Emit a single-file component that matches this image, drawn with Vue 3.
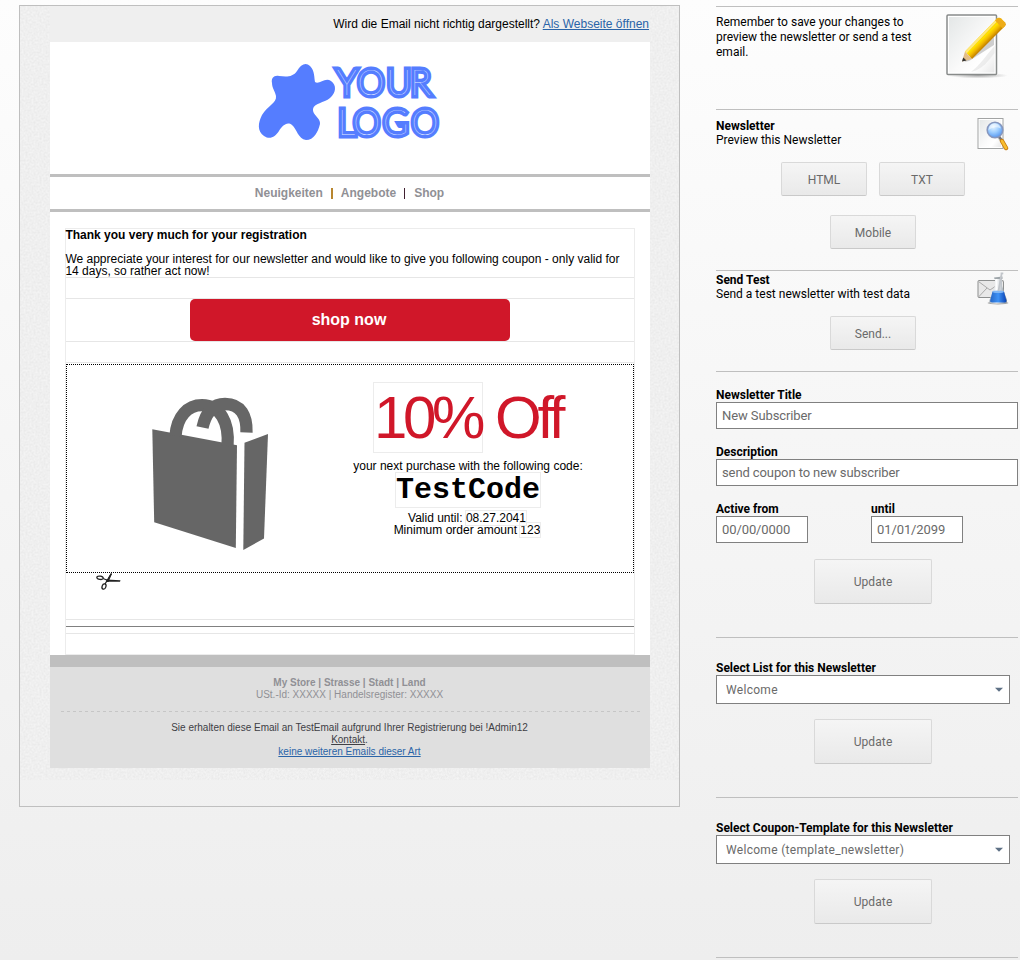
<script setup>
const selects = [
  { label: 'Select List for this Newsletter', value: 'Welcome' },
  { label: 'Select Coupon-Template for this Newsletter', value: 'Welcome (template_newsletter)' },
]
</script>

<template>
  <div class="page">
    <main class="panel">
      <svg class="grain" width="659" height="774" aria-hidden="true">
        <filter id="grain" x="0" y="0" width="100%" height="100%" color-interpolation-filters="sRGB">
          <feTurbulence type="fractalNoise" baseFrequency="0.5" numOctaves="2" seed="4" stitchTiles="stitch" />
          <feColorMatrix type="matrix" values="0.07 0 0 0 0.902  0.07 0 0 0 0.902  0.07 0 0 0 0.902  0 0 0 0 1" />
        </filter>
        <rect width="659" height="774" filter="url(#grain)" />
      </svg>
      <div class="email">
        <div class="webview">Wird die Email nicht richtig dargestellt? <a class="blue">Als Webseite öffnen</a></div>
        <div class="brand">
          <svg width="190" height="90" viewBox="255 58 190 90">
            <path fill="#557dff" d="M272 83C271 78 274 75 279 76C287 77 293 77 297 71C301 64 306 62 310 66C315 71 314 78 315 82C319 85 325 77 331 81C337 85 336 93 330 98C324 103 314 103 313 109C312 115 321 118 320 124C318 132 314 140 306 140C298 139 297 129 292 125C287 121 282 126 279 131C275 137 270 140 264 136C257 131 258 123 262 115C267 106 277 103 276 96C275 91 272 88 272 83Z" />
            <g class="logo">
              <text transform="translate(337 94.500) scale(.95 1)" x="0 21.500 52 77.500">YOUR</text>
              <text transform="translate(337 135) scale(.95 1)" x="1 17.200 48.500 78.500">LOGO</text>
            </g>
          </svg>
        </div>
        <nav class="nav"><a>Neuigkeiten</a><i class="sep amber"></i><a>Angebote</a><i class="sep dark"></i><a>Shop</a></nav>
        <div class="content">
          <div class="frame">
            <div class="intro">
              <b>Thank you very much for your registration</b>
              <p>We appreciate your interest for our newsletter and would like to give you following coupon - only valid for<br>14 days, so rather act now!</p>
            </div>
            <div class="cta"><a class="shop">shop now</a></div>
            <div class="spacer"></div>
            <div class="coupon">
              <svg class="bag" width="120" height="156" viewBox="0 0 120 156">
                <g fill="#666">
                  <path d="M1.300 33.300L86 49.300L84.800 152L3.200 126.300Z" />
                  <path d="M93.500 46.800L117 38L113 142.500L92.300 154Z" />
                </g>
                <g fill="none" stroke="#666" stroke-width="12.300">
                  <path d="M24.500 40C26 20 37 9.200 51 9.200C69 9.200 78.500 26 76.500 50" />
                  <path d="M51.500 31.500C55 16 62 8 74 8C90 8 96 20 95.500 36.500" />
                </g>
              </svg>
              <div class="offer">
                <div class="percent"><span class="boxed">10%</span> Off</div>
                <div class="next">your next purchase with the following code:</div>
                <div class="code"><span class="boxed">TestCode</span></div>
                <div class="terms">Valid until: <span class="boxed">08.27.2041</span></div>
                <div class="terms">Minimum order amount <span class="boxed">123</span></div>
              </div>
            </div>
            <div class="cut">
              <svg width="26" height="18" viewBox="0 0 26 18">
                <g fill="none" stroke="#222" stroke-width="1.300">
                  <ellipse cx="4" cy="4.800" rx="3.200" ry="1.600" transform="rotate(8 4 4.800)" />
                  <ellipse cx="8" cy="13.500" rx="1.900" ry="2.700" transform="rotate(20 8 13.500)" />
                  <path d="M7 5.500L12 7.500M9 11L15.500 .5" />
                </g>
                <path fill="#222" d="M10 6.500L24.500 7.300L24 8.800L11 8.800Z" />
                <path fill="#222" d="M10 9L14.500 .5L16 .8L12.500 9Z" />
              </svg>
            </div>
            <div class="rule"></div>
          </div>
        </div>
        <footer class="footer">
          <div class="imprint"><b>My Store | Strasse | Stadt | Land</b><br>USt.-Id: XXXXX | Handelsregister: XXXXX</div>
          <svg class="dashes" width="580" height="1"><path d="M1 .5H580" stroke="#c6c6c6" stroke-dasharray="3 3" /></svg>
          <div class="legal">Sie erhalten diese Email an TestEmail aufgrund Ihrer Registrierung bei !Admin12<br><u>Kontakt</u>.<br><a class="blue">keine weiteren Emails dieser Art</a></div>
        </footer>
      </div>
    </main>

    <aside class="side">
      <section class="s-note">
        <p>Remember to save your changes to<br>preview the newsletter or send a test<br>email.</p>
        <svg class="icon-note" width="64" height="68" viewBox="0 0 64 68">
          <defs>
            <linearGradient id="sheet" x1="0" y1="0" x2="1" y2="1"><stop offset="0" stop-color="#e4e7e7" /><stop offset=".55" stop-color="#fafafa" /><stop offset=".75" stop-color="#fff" /><stop offset="1" stop-color="#e8e8e8" /></linearGradient>
            <linearGradient id="pencil" gradientUnits="userSpaceOnUse" x1="35" y1="22" x2="42.500" y2="29.500"><stop offset="0" stop-color="#f5c400" /><stop offset=".4" stop-color="#ffe000" /><stop offset=".7" stop-color="#f2b900" /><stop offset="1" stop-color="#c98700" /></linearGradient>
            <radialGradient id="ground"><stop offset="0" stop-color="#888" stop-opacity=".7" /><stop offset="1" stop-color="#888" stop-opacity="0" /></radialGradient>
          </defs>
          <ellipse cx="33" cy="62.500" rx="30" ry="3" fill="url(#ground)" />
          <rect x="2" y="2" width="49.500" height="59.500" rx="1" fill="#fff" stroke="#888b8a" stroke-width="1.500" />
          <rect x="4" y="4" width="45.500" height="55.500" fill="url(#sheet)" />
          <path d="M26 59C34 53 40 44 49.500 33V40C43 48 38 56 26 59Z" fill="#ddd" opacity=".5" />
          <path d="M19 49L49 24V32L24 48Z" fill="#777" opacity=".35" />
          <path d="M20 38.500L52 5.500Q54 4 56 5.500L60 9.500Q61.500 11.500 60 13L27 46Z" fill="url(#pencil)" />
          <path d="M20 38.500L52 5.500L53.500 7L21.500 40.500Z" fill="#ffe97a" />
          <path d="M50 7.500L52 5.500Q54 4 56 5.500L60 9.500Q61.500 11.500 60 13L57.500 15.500Z" fill="#eeac18" />
          <path d="M20 38.500L27 46L17 48.500Z" fill="#e3bd87" />
          <path d="M18.200 44.500L21.500 47.400L17 48.500Z" fill="#333" />
        </svg>
      </section>

      <section class="s-preview">
        <div class="row">
          <p><b>Newsletter</b><br>Preview this Newsletter</p>
          <svg class="icon-s" width="32" height="34" viewBox="0 0 32 34">
            <defs>
              <radialGradient id="lens" cx=".4" cy=".3" r=".8"><stop offset="0" stop-color="#e5f4ff" /><stop offset=".45" stop-color="#9ccdff" /><stop offset="1" stop-color="#4388ec" /></radialGradient>
            </defs>
            <rect x="1" y="1.500" width="25" height="30" fill="#fff" stroke="#a2a4a4" />
            <rect x="2.500" y="3" width="21.500" height="27" fill="url(#sheet)" />
            <path d="M21 19L24 23L29.500 31" stroke="#777" stroke-width="3" opacity=".4" fill="none" />
            <path d="M21.500 19L25 23.500" stroke="#777" stroke-width="2.500" />
            <path d="M25 24L29 31" stroke="#c77b10" stroke-width="4.400" stroke-linecap="round" />
            <path d="M25 24L29 31" stroke="#f8bd2f" stroke-width="2.600" stroke-linecap="round" />
            <circle cx="18" cy="13" r="7.800" fill="url(#lens)" stroke="#8797bd" stroke-width="1.600" />
            <path d="M11.500 13Q17 8.500 24 11.500C22.500 5 12.500 4 11.500 13Z" fill="#fff" opacity=".5" />
          </svg>
        </div>
        <div class="buttons"><button class="btn">HTML</button><button class="btn">TXT</button></div>
        <div class="buttons"><button class="btn">Mobile</button></div>
      </section>

      <section class="s-test">
        <div class="row">
          <p><b>Send Test</b><br>Send a test newsletter with test data</p>
          <svg class="icon-s" width="32" height="34" viewBox="0 0 32 34">
            <defs>
              <linearGradient id="liquid"><stop offset="0" stop-color="#2566c6" /><stop offset=".5" stop-color="#3e92f5" /><stop offset="1" stop-color="#0a43b5" /></linearGradient>
              <linearGradient id="glass"><stop offset="0" stop-color="#a9b4bd" /><stop offset=".4" stop-color="#fff" /><stop offset="1" stop-color="#7d8b98" /></linearGradient>
            </defs>
            <rect x="1" y="9.500" width="25.500" height="17" rx="1" fill="#e8e8e8" stroke="#8d8f8f" />
            <path d="M1.500 10.500L13 19L25.500 10.500M1.500 26L10 17" fill="none" stroke="#aaa" />
            <ellipse cx="21" cy="32" rx="10.500" ry="1.500" fill="#555" opacity=".5" />
            <path d="M18 7.500H25V15L30 29Q30.500 32.500 27.500 32.500H15Q11.500 32.500 12.500 29L18 15Z" fill="url(#glass)" />
            <path d="M15.500 20.500H27L29.300 29.500Q29.600 31.500 27 31.500H15.500Q12.500 31.500 13.300 29Z" fill="url(#liquid)" />
            <ellipse cx="21.200" cy="20.800" rx="5.700" ry="1.200" fill="#80b7f5" />
            <path d="M17 6.500L25.500 5.500V8H17.500Z" fill="#9fa6aa" />
            <path d="M21.500 20L24.500 3.500V2.300H26.300" fill="none" stroke="#c1c5ca" stroke-width="1.800" />
          </svg>
        </div>
        <div class="buttons"><button class="btn">Send...</button></div>
      </section>

      <section class="s-form">
        <label class="field"><b>Newsletter Title</b><input value="New Subscriber"></label>
        <label class="field"><b>Description</b><input value="send coupon to new subscriber"></label>
        <div class="dates">
          <label class="field"><b>Active from</b><input value="00/00/0000"></label>
          <label class="field"><b>until</b><input value="01/01/2099"></label>
        </div>
        <button class="btn big">Update</button>
      </section>

      <section v-for="s in selects" :key="s.label" class="s-select">
        <b>{{ s.label }}</b>
        <div class="select">{{ s.value }}<svg width="8" height="5" viewBox="0 0 8 5"><path d="M0 .8H8L4 4.800Z" fill="#5d7085" /></svg></div>
        <button class="btn big">Update</button>
      </section>
      <section class="s-end"></section>
    </aside>
  </div>
</template>

<style>
body { overflow: hidden; }
</style>

<style scoped>
* { box-sizing: border-box; }
p { margin: 0; }
.page {
  display: flex; align-items: flex-start; width: 1020px; height: 960px; overflow: hidden;
  background: linear-gradient(#fdfdfd, #f6f6f6 45%, #eee);
  font-family: "Liberation Sans", Arial, sans-serif; font-size: 12px; color: #000;
}
.panel {
  position: relative; width: 661px; height: 802px; margin: 5px 0 0 19px; padding: 0 29px 0 30px;
  border: 1px solid #bfbfbf;
}
.grain { position: absolute; left: 0; top: 0; display: block; }
.email { position: relative; width: 600px; }
.blue { color: #2a64a8; text-decoration: underline; }
.webview { height: 36px; padding-right: 1px; line-height: 36px; text-align: right; background: #efefef; }
.brand { display: flex; justify-content: center; height: 132px; padding-top: 16px; background: #fff; }
.logo { font: 100 36px Lato, sans-serif; fill: #e4ecff; stroke: #557dff; stroke-width: 7px; paint-order: stroke; }
.nav {
  display: flex; align-items: center; justify-content: center; height: 38px; padding-right: 1px; background: #fff;
  border-top: 3px solid #bfbfbf; border-bottom: 3px solid #bfbfbf;
  font-weight: bold; color: #909095;
}
.sep { width: 1px; height: 11px; margin: 0 9px 0 8px; background: #402030; }
.sep.amber { width: 2px; margin-right: 8px; background: #b8862f; }
.content { height: 443px; padding: 16px 15px 0; background: #fff; }
.frame { height: 427px; border: 1px solid #ececec; }
.intro { height: 49px; border-bottom: 1px solid #e6e6e6; line-height: 12px; white-space: nowrap; }
.intro b { display: block; margin-bottom: 12px; }
.intro b, .intro p { margin-left: -.6px; }
.cta { height: 44px; margin-top: 20px; border: solid #e6e6e6; border-width: 1px 0; }
.spacer { height: 21px; border-bottom: 1px solid #e6e6e6; }
.shop {
  display: block; width: 320px; height: 42px; margin: 0 auto; padding-right: 2px; border-radius: 5px; background: #d01729;
  color: #fff; font-size: 16px; font-weight: bold; line-height: 42px; text-align: center;
}
.coupon { display: flex; height: 209px; margin-top: 1px; border: 1px dotted #000; }
.bag { flex: none; margin: 31px 0 0 84px; }
.offer { flex: none; width: 268px; margin-left: 63px; padding-top: 18px; text-align: center; white-space: nowrap; line-height: 12px; }
.boxed { outline: 1px solid #ececec; }
.percent { height: 77px; padding-right: 1px; color: #d01729; font-size: 60px; line-height: 70px; letter-spacing: -4.3px; word-spacing: 1.5px; }
.percent .boxed { position: relative; z-index: 0; padding: 1px 1px 1px 0; margin-right: -1px; outline: 0; box-shadow: 0 0 0 1px #ececec; }
.code { height: 40px; font: bold 30px/36px "Liberation Mono", "Courier New", monospace; }
.next { height: 12px; }
.terms { height: 12px; padding-right: 2px; }
.cut { height: 47px; padding: 0 0 0 30px; border-bottom: 1px solid #e6e6e6; }
.cut svg { display: block; }
.rule { height: 14px; border-bottom: 1px solid #e6e6e6; background: linear-gradient(#808080, #808080) 0 6px / 100% 1px no-repeat; }
.footer {
  height: 113px; padding: 10px 1px 0 0; border-top: 12px solid #bfbfbf; background: #dfdfdf;
  font-size: 10px; line-height: 12px; text-align: center; color: #404045;
}
.imprint { color: #909095; }
.dashes { display: block; margin: 10px 0 0 10px; }
.legal { margin-top: 10px; }

.side { width: 302px; margin: 6px 0 0 36px; font-family: Roboto, sans-serif; line-height: 14px; }
.side section { border-top: 1px solid #bfbfbf; }
.s-note { display: flex; justify-content: space-between; height: 103px; padding: 8px 9px 0 0; line-height: 15px; }
.icon-note { margin: -2px 0 0; }
.row { display: flex; justify-content: space-between; padding-right: 9px; }
.s-preview { height: 161px; padding-top: 9px; }
.icon-s { margin-top: -2px; }
.s-preview .row { height: 43px; }
.buttons { display: flex; justify-content: center; gap: 12px; padding-left: 12px; }
.buttons + .buttons { margin-top: 19px; }
.btn {
  width: 86px; height: 34px; padding: 2px 0 0; border: 1px solid #d9d9d9; border-bottom-color: #c9c9c9; border-radius: 2px;
  background: linear-gradient(#f5f5f5, #e9e9e9); font: 12px Roboto, sans-serif; color: #6a6a6a; letter-spacing: 0;
}
.s-test { height: 101px; padding-top: 2px; }
.s-test .row { height: 43px; }
.s-form { height: 266px; padding-top: 16px; }
.field { display: block; height: 57px; }
.field b { display: block; }
.field input {
  display: block; width: 100%; height: 27px; padding: 0 5px; border: 1px solid #808080; border-radius: 0; outline: 0;
  background: #fff; font: 13px Roboto, sans-serif; letter-spacing: -.1px; color: #6a6a6a;
}
.dates { display: flex; gap: 63px; }
.dates .field { width: 92px; }
.big { display: block; width: 118px; height: 45px; margin: 0 0 0 98px; padding: 0; letter-spacing: .1px; }
.s-select { height: 160px; padding-top: 23px; }
.s-select b { display: block; }
.select {
  display: flex; align-items: center; justify-content: space-between; width: 294px; height: 29px; margin-bottom: 15px;
  padding: 0 6px 0 9px; border: 1px solid #808080; background: #fff; color: #6a6a6a; letter-spacing: .3px;
}
</style>
